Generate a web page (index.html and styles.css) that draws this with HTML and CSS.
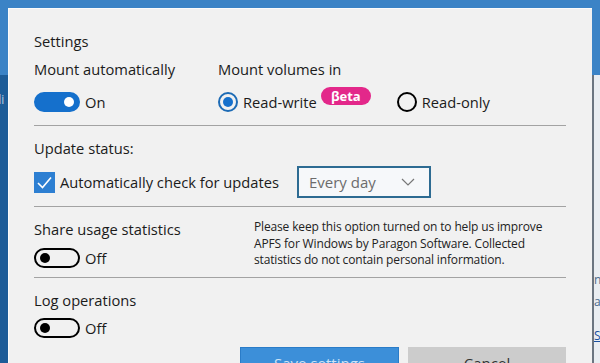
FILE: index.html
```html
<!DOCTYPE html>
<html lang="en">
<head>
	<meta charset="UTF-8">
	<title>Settings</title>
	<link rel="stylesheet" href="styles.css">
</head>
<body>
	<div class="screen">
		<div class="side side-left">
			<div class="side-top"></div>
			<div class="side-bottom"><span class="peek">di</span></div>
		</div>

		<div class="dialog">
			<div class="title">Settings</div>

			<div class="mount">
				<div class="mount-auto">
					<div class="label">Mount automatically</div>
					<div class="control">
						<span class="toggle on"><span class="knob"></span></span>
						<span class="text">On</span>
					</div>
				</div>
				<div class="mount-mode">
					<div class="label">Mount volumes in</div>
					<div class="control">
						<span class="radio checked"></span>
						<span class="text">Read-write</span>
						<span class="beta">βeta</span>
						<span class="radio"></span>
						<span class="text">Read-only</span>
					</div>
				</div>
			</div>

			<div class="divider"></div>

			<div class="label">Update status:</div>
			<div class="control update">
				<span class="checkbox">
					<svg width="21" height="21" viewBox="0 0 21 21"><path d="M4 11 L8.5 15.5 L17 5.5" fill="none" stroke="#fff" stroke-width="1.6"/></svg>
				</span>
				<span class="text">Automatically check for updates</span>
				<span class="select">
					<span>Every day</span>
					<svg width="14" height="8" viewBox="0 0 14 8"><path d="M1 1 L7 7 L13 1" fill="none" stroke="#777" stroke-width="1.2"/></svg>
				</span>
			</div>

			<div class="divider"></div>

			<div class="share">
				<div class="share-left">
					<div class="label">Share usage statistics</div>
					<div class="control">
						<span class="toggle"><span class="knob"></span></span>
						<span class="text">Off</span>
					</div>
				</div>
				<p class="note">Please keep this option turned on to help us improve APFS for Windows by Paragon Software. Collected statistics do not contain personal information.</p>
			</div>

			<div class="divider"></div>

			<div class="label">Log operations</div>
			<div class="control log">
				<span class="toggle"><span class="knob"></span></span>
				<span class="text">Off</span>
			</div>

			<div class="buttons">
				<button class="btn save">Save settings</button>
				<button class="btn cancel">Cancel</button>
			</div>
		</div>

		<div class="side side-right">
			<div class="side-top"></div>
			<div class="side-bottom">
				<span class="peek-r p1">n</span>
				<span class="peek-r p2">ac</span>
				<span class="peek-r p3">S</span>
			</div>
		</div>
	</div>
</body>
</html>
```

FILE: styles.css
```css
* {
    margin: 0;
    padding: 0;
    box-sizing: border-box;
}

html, body {
    width: 600px;
    height: 363px;
    overflow: hidden;
}

body {
    background: #3b83c6;
    font-family: "Open Sans", "Noto Sans", sans-serif;
    font-size: 14.7px;
    color: #1b1b1b;
}

.screen {
    display: flex;
    height: 363px;
}

.side {
    display: flex;
    flex-direction: column;
    width: 8px;
    flex: none;
}

.side-top {
    height: 75px;
    background: #3b83c6;
}

.side-bottom {
    flex: 1;
    position: relative;
    overflow: hidden;
}

.side-left .side-bottom {
    background: #1d5c98;
}

.side-right .side-bottom {
    background: #e9edf1;
    border-left: 2px solid #6b7580;
}

.peek {
    position: absolute;
    top: 16px;
    left: -6px;
    font-size: 12px;
    color: #b9cde0;
}

.peek-r {
    position: absolute;
    left: 0;
    font-size: 12px;
    color: #4a6a8a;
}

.p1 { top: 196px; }
.p2 { top: 218px; }
.p3 { top: 252px; color: #1a50a0; text-decoration: underline; }

.dialog {
    flex: 1;
    margin-top: 8px;
    padding: 22px 26px 0 25px;
    background: #f1f1f1;
    border-top: 1px solid #fbfbfb;
    border-left: 1px solid #fbfbfb;
}

.title,
.label,
.text {
    line-height: 20px;
    white-space: nowrap;
}

.mount {
    display: flex;
    margin-top: 8px;
}

.mount-auto {
    width: 184px;
}

.control {
    display: flex;
    align-items: center;
    height: 20px;
    margin-top: 13px;
}

.toggle {
    position: relative;
    width: 46px;
    height: 20px;
    border: 2px solid #000;
    border-radius: 10px;
    margin-right: 5px;
}

.toggle .knob {
    position: absolute;
    top: 3px;
    left: 4px;
    width: 10px;
    height: 10px;
    border-radius: 50%;
    background: #000;
}

.toggle.on {
    background: #1570cc;
    border-color: #1570cc;
}

.toggle.on .knob {
    left: auto;
    right: 4px;
    background: #fff;
}

.radio {
    width: 20px;
    height: 20px;
    border: 2px solid #000;
    border-radius: 50%;
    margin-right: 5px;
    position: relative;
}

.radio.checked {
    border-color: #1d6bb5;
}

.radio.checked::after {
    content: "";
    position: absolute;
    top: 3px;
    left: 3px;
    width: 10px;
    height: 10px;
    border-radius: 50%;
    background: #1570cc;
}

.beta {
    align-self: flex-start;
    margin: -5px 26px 0 4px;
    width: 50px;
    height: 18px;
    border-radius: 9px;
    background: #e3288a;
    color: #fff;
    font-weight: bold;
    font-size: 13px;
    line-height: 18px;
    text-align: center;
}

.divider {
    height: 1px;
    background: #a3a3a3;
    margin-top: 13px;
    margin-bottom: 12px;
}

.control.update {
    height: 32px;
    margin-top: 8px;
}

.checkbox {
    width: 21px;
    height: 21px;
    background: #2d7fd2;
    margin-right: 5px;
    display: flex;
}

.select {
    display: flex;
    align-items: center;
    justify-content: space-between;
    width: 134px;
    height: 32px;
    margin-left: 18px;
    padding: 0 14px 0 10px;
    border: 2px solid #2d6b92;
    background: #f6f8fa;
    color: #6c6c6c;
    font-size: 15px;
}

.update + .divider {
    margin-top: 8px;
}

.share {
    display: flex;
    height: 49px;
}

.share-left {
    width: 220px;
}

.share .control {
    margin-top: 9px;
}

.note {
    width: 300px;
    font-size: 12px;
    letter-spacing: -0.15px;
    line-height: 16.5px;
    color: #222;
}

.share + .divider {
    margin-top: 9px;
}

.control.log {
    margin-top: 8px;
}

.buttons {
    display: flex;
    justify-content: flex-end;
    gap: 9px;
    margin-top: 9px;
}

.btn {
    width: 159px;
    height: 32px;
    border: none;
    font-family: inherit;
    font-size: 15px;
}

.save {
    background: #3c8fd9;
    border: 1px solid #2a7cc8;
    color: #cde3f6;
}

.cancel {
    width: 158px;
    background: #cccccc;
    color: #333;
}
```
